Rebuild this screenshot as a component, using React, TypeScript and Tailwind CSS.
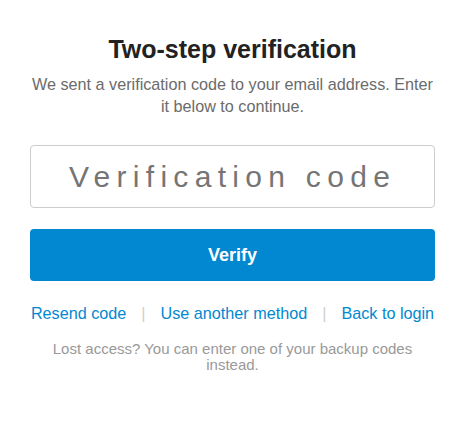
import { useState } from "react";

const links = ["Resend code", "Use another method", "Back to login"];

export default function App() {
  const [code, setCode] = useState("");

  return (
    <div className="min-h-screen bg-white font-['Liberation_Sans',Arial,sans-serif]">
      <div className="ml-[30px] w-[405px] pt-[34px] flex flex-col items-center text-center">
        <h1 className="text-[25px] leading-[30px] font-bold text-[#222]">Two-step verification</h1>
        <p className="mt-[9px] text-[16.2px] leading-[22px] text-[#6b6b6b]">
          We sent a verification code to your email address. Enter it below to continue.
        </p>

        <input
          value={code}
          onChange={(e) => setCode(e.target.value)}
          placeholder="Verification code"
          className="mt-[28px] w-full h-[63px] rounded-[4px] border border-[#cccccc] bg-white text-center text-[30px] tracking-[6.3px] text-[#333] placeholder:text-[#757575] outline-none"
        />

        <button className="mt-[21px] w-full h-[52px] rounded-[4px] bg-[#0288d1] text-white text-[18px] font-bold">
          Verify
        </button>

        <div className="mt-[22px] flex items-center text-[16.2px] leading-[20px]">
          {links.map((label, i) => (
            <div key={label} className="flex items-center">
              {i > 0 && <span className="mx-[15px] text-[#cfcfcf]">|</span>}
              <a href="#" className="text-[#0288d1]">{label}</a>
            </div>
          ))}
        </div>

        <p className="mt-[18px] text-[15px] leading-[16px] text-[#999]">
          Lost access? You can enter one of your backup codes instead.
        </p>
      </div>
    </div>
  );
}
